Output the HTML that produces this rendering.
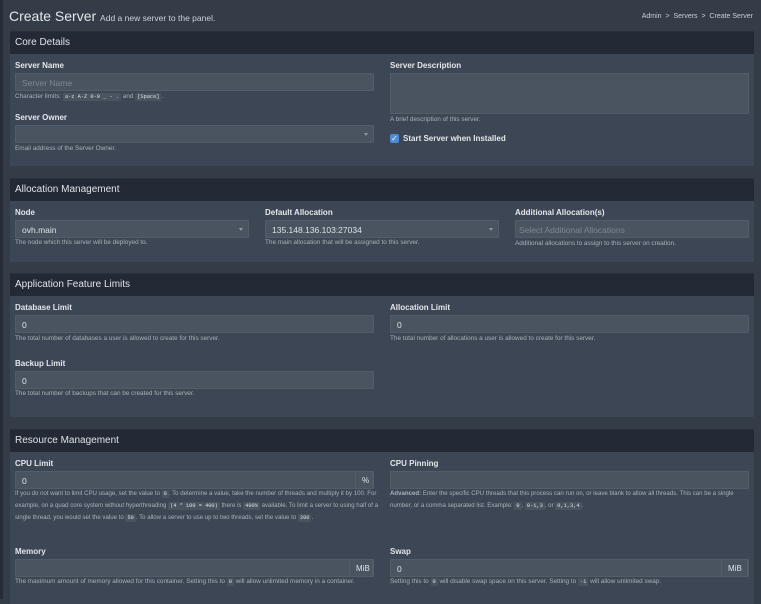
<!DOCTYPE html>
<html><head><meta charset="utf-8"><style>
*{box-sizing:border-box;margin:0;padding:0}
body{width:761px;height:599px;overflow:hidden;background:#343c48;font-family:"Liberation Sans",sans-serif;color:#c7ccd3;position:relative}
.edge{position:absolute;left:0;top:0;width:3px;height:599px;background:#252c35}
.abs{position:absolute}
.title{left:9px;top:8px;font-size:14px;color:#e3e6ea}
.title small{font-size:8.5px;color:#cdd2d8}
.bc{right:8px;top:13px;font-size:7px;color:#c9ced4}
.box{position:absolute;left:10px;width:744px;background:#3d4654;border-top:1px solid #2a313b}
.hd{height:22px;background:#232a35;color:#dfe3e8;font-size:10px;padding:5px 5px}
.lbl{position:absolute;font-size:8px;font-weight:bold;color:#e4e7eb}
.inp{position:absolute;height:18px;background:#4a5461;border:1px solid #535d6a;border-radius:1px;font-size:8.5px;color:#dde1e6;padding:4px 6px}
.ph{color:#7d8794}
.help{position:absolute;font-size:6.4px;color:#a9b0b9;line-height:12px}
code{font-family:"Liberation Mono",monospace;font-size:5.3px;background:#4a5461;padding:1px 2px;border-radius:1px;color:#dde1e6}
.car{position:absolute;right:5px;top:7px;border-left:2.5px solid transparent;border-right:2.5px solid transparent;border-top:3px solid #8f98a3}
.add{position:absolute;right:0;top:-1px;height:18px;border:1px solid #535d6a;background:#4a5461;font-size:8px;padding:4px 6px;color:#dde1e6}
</style></head><body>
<div class="edge"></div>
<div class="abs title">Create Server <small>Add a new server to the panel.</small></div>
<div class="abs bc">Admin &nbsp;&gt;&nbsp; Servers &nbsp;&gt;&nbsp; Create Server</div>

<div class="box" style="top:31px;height:135px">
<div class="hd">Core Details</div>
<div class="lbl" style="left:5px;top:29px">Server Name</div>
<div class="inp" style="left:5px;top:41px;width:359px"><span class="ph">Server Name</span></div>
<div class="help" style="left:5px;top:59px">Character limits: <code>a-z A-Z 0-9 _ - .</code> and <code>[Space]</code>.</div>
<div class="lbl" style="left:5px;top:81px">Server Owner</div>
<div class="inp" style="left:5px;top:93px;width:359px"><span class="car"></span></div>
<div class="help" style="left:5px;top:111px">Email address of the Server Owner.</div>
<div class="lbl" style="left:380px;top:29px">Server Description</div>
<div class="inp" style="left:380px;top:41px;width:359px;height:41px"></div>
<div class="help" style="left:380px;top:82px">A brief description of this server.</div>
<div class="abs" style="left:380px;top:102px;width:9px;height:9px;background:#4f8ad4;border-radius:2px;color:#fff;font-size:8px;line-height:9px;text-align:center">✓</div>
<div class="lbl" style="left:393px;top:102px">Start Server when Installed</div>
</div>

<div class="box" style="top:178px;height:84px">
<div class="hd">Allocation Management</div>
<div class="lbl" style="left:5px;top:29px">Node</div>
<div class="inp" style="left:5px;top:41px;width:234px">ovh.main<span class="car"></span></div>
<div class="help" style="left:5px;top:58px">The node which this server will be deployed to.</div>
<div class="lbl" style="left:255px;top:29px">Default Allocation</div>
<div class="inp" style="left:255px;top:41px;width:234px">135.148.136.103:27034<span class="car"></span></div>
<div class="help" style="left:255px;top:58px">The main allocation that will be assigned to this server.</div>
<div class="lbl" style="left:505px;top:29px">Additional Allocation(s)</div>
<div class="inp" style="left:505px;top:41px;width:234px;padding-left:3px"><span class="ph">Select Additional Allocations</span></div>
<div class="help" style="left:505px;top:59px">Additional allocations to assign to this server on creation.</div>
</div>

<div class="box" style="top:273px;height:144px">
<div class="hd">Application Feature Limits</div>
<div class="lbl" style="left:5px;top:29px">Database Limit</div>
<div class="inp" style="left:5px;top:41px;width:359px">0</div>
<div class="help" style="left:5px;top:59px">The total number of databases a user is allowed to create for this server.</div>
<div class="lbl" style="left:380px;top:29px">Allocation Limit</div>
<div class="inp" style="left:380px;top:41px;width:359px">0</div>
<div class="help" style="left:380px;top:59px">The total number of allocations a user is allowed to create for this server.</div>
<div class="lbl" style="left:5px;top:85px">Backup Limit</div>
<div class="inp" style="left:5px;top:97px;width:359px">0</div>
<div class="help" style="left:5px;top:114px">The total number of backups that can be created for this server.</div>
</div>

<div class="box" style="top:429px;height:175px">
<div class="hd">Resource Management</div>
<div class="lbl" style="left:5px;top:29px">CPU Limit</div>
<div class="inp" style="left:5px;top:41px;width:359px">0<span class="add" style="width:18px">%</span></div>
<div class="help" style="left:5px;top:58px;width:366px;font-size:6.1px">If you do not want to limit CPU usage, set the value to <code>0</code>. To determine a value, take the number of threads and multiply it by 100. For example, on a quad core system without hyperthreading <code>(4 * 100 = 400)</code> there is <code>400%</code> available. To limit a server to using half of a single thread, you would set the value to <code>50</code>. To allow a server to use up to two threads, set the value to <code>200</code>.</div>
<div class="lbl" style="left:5px;top:117px">Memory</div>
<div class="inp" style="left:5px;top:129px;width:359px"><span class="add" style="width:24px">MiB</span></div>
<div class="help" style="left:5px;top:146px">The maximum amount of memory allowed for this container. Setting this to <code>0</code> will allow unlimited memory in a container.</div>
<div class="lbl" style="left:380px;top:29px">CPU Pinning</div>
<div class="inp" style="left:380px;top:41px;width:359px"></div>
<div class="help" style="left:380px;top:58px;width:366px;font-size:6.1px"><b>Advanced:</b> Enter the specific CPU threads that this process can run on, or leave blank to allow all threads. This can be a single number, or a comma separated list. Example: <code>0</code>, <code>0-1,3</code>, or <code>0,1,3,4</code>.</div>
<div class="lbl" style="left:380px;top:117px">Swap</div>
<div class="inp" style="left:380px;top:129px;width:359px">0<span class="add" style="width:27px">MiB</span></div>
<div class="help" style="left:380px;top:146px">Setting this to <code>0</code> will disable swap space on this server. Setting to <code>-1</code> will allow unlimited swap.</div>
</div>
</body></html>
